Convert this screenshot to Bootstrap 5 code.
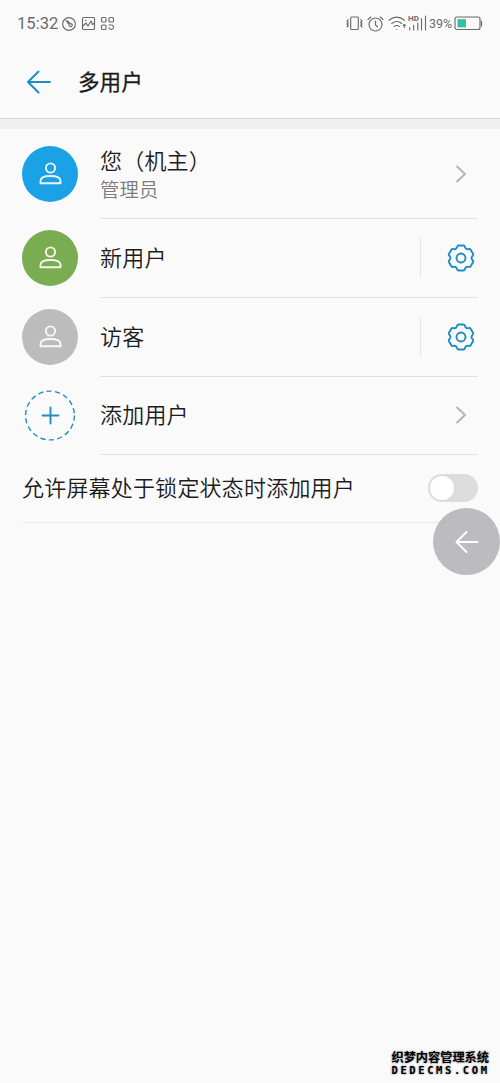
<!DOCTYPE html>
<html lang="zh-CN">
<head>
<meta charset="utf-8">
<meta name="viewport" content="width=device-width, initial-scale=1">
<title>多用户</title>
<link href="https://cdn.jsdelivr.net/npm/bootstrap@5.3.0/dist/css/bootstrap.min.css" rel="stylesheet">
<style>
body{background:#fafafa;color:#1c1c1c;font-family:Roboto,"Noto Sans CJK SC",sans-serif;font-weight:350;min-height:1083px;font-size:22px;line-height:30px;letter-spacing:.2px}
svg{display:block;flex:none;overflow:visible;fill:none;stroke-linecap:round;stroke-linejoin:round}
.status{height:46px;padding:1px 17px 0;color:#6b6b6b;font-size:16.6px;letter-spacing:0;font-weight:400}
.status svg{stroke:#6b6b6b;stroke-width:1.15}
.pct{font-size:12.5px;width:24px}
.topbar{height:73px;padding:0 26px;border-bottom:1px solid #d6d6d6}
.topbar h1{font-size:21.6px;font-weight:400;-webkit-text-stroke:.3px #1c1c1c;letter-spacing:0;margin-left:27px;padding-top:2px}
.band{height:10px;background:#efefef}
.user-row{padding:0 22px;height:79px}
.user-row.owner{height:90px}
.user-row.short{height:78.5px}
.avatar{width:56px;height:56px;flex:none;margin-top:-1px}
.avatar svg{stroke:#fff;stroke-width:1.9;opacity:.9}
.user-body{margin-left:22px;border-bottom:1px solid #e2e2e2}
.label{padding-top:2px}
.owner .label{padding-top:4px}
.sub{font-size:19.3px;line-height:27px;color:#7c7c7c}
.sep{width:1px;height:39px;background:#e4e4e4;margin-right:26px}
.gear{stroke:#1d8dc4;stroke-width:1.9;margin-right:3px}
.chev{stroke:#b5b5b5;stroke-width:2;margin-right:11px;stroke-linecap:butt;stroke-linejoin:miter}
.lock-row{height:67.500px;margin:0 22px;border-bottom:1px solid #e8e8e8}
.toggle{width:50px;height:28px;padding:2px;background:#dcdcdc}
.toggle span{width:24px;height:24px;background:#fff}
.float-back{right:0;top:508px;width:67px;height:67px;background:rgba(172,173,177,.8)}
.mark-site{right:11px;bottom:7px;color:#000;text-shadow:0 0 2px #999,0 0 2px #aaa,1px 1px 0 #fff,-1px -1px 0 #fff;letter-spacing:0}
.mark-cn{font:700 12.2px/14px "Noto Sans CJK SC",sans-serif}
.mark-en{font:700 10.5px/12px "DejaVu Sans Mono",monospace;letter-spacing:2.6px;margin-right:-3px}
</style>
</head>
<body class="position-relative">
<svg width="0" height="0" class="position-absolute">
  <symbol id="person" viewBox="0 0 24 24"><circle cx="12.500" cy="6" r="4.600"/><path d="M2.500 21.200v-2.200c0-3.300 4.400-5 10-5s10 1.700 10 5v2.200z"/></symbol>
  <symbol id="gear" viewBox="-14 -14 28 28"><path d="M-2.700-12.500H2.700C4-12.500 3.690-10 5.250-9.100S8.830-9.710 9.475-8.590L12.175-3.910C12.825-2.790 10.500-1.800 10.500 0S12.825 2.790 12.175 3.910L9.475 8.590C8.830 9.710 6.810 8.200 5.250 9.100S4 12.500 2.700 12.500H-2.700C-4 12.500-3.690 10-5.250 9.100S-8.830 9.710-9.475 8.590L-12.175 3.910C-12.825 2.790-10.500 1.800-10.500 0S-12.825-2.790-12.175-3.910L-9.475-8.590C-8.830-9.710-6.810-8.200-5.250-9.100S-4-12.500-2.700-12.500z"/><circle r="4.500"/></symbol>
</svg>

<div class="status d-flex align-items-center">
  <span>15:32</span>
  <svg class="ms-1" width="14" height="14" viewBox="0 0 14 14"><circle cx="7" cy="7" r="6.400"/><path d="M4 3.500l3 4M5.500 4l3 3M7 8a1.600 1.600 0 1 0 2.500-1.300"/></svg>
  <svg style="margin-left:6px" width="13" height="13" viewBox="0 0 13 13"><rect x=".5" y=".5" width="12" height="12" rx="1"/><path d="M1 9l3-3 2 3 3-5 1.500 3.500L12 6.500M3.500 3.400h.4"/></svg>
  <svg style="margin-left:6px" width="13" height="13" viewBox="0 0 13 13"><rect x=".5" y=".5" width="4.500" height="4.500" rx="1"/><rect x="8" y=".5" width="4.500" height="4.500" rx="1"/><rect x=".5" y="8" width="4.500" height="4.500" rx="1"/><path d="M8 8h2.500a2.200 2.200 0 1 1-2.300 2.800"/></svg>
  <div class="ms-auto d-flex align-items-center">
    <svg width="17" height="15" viewBox="0 0 17 15"><rect x="4.700" y="1" width="7.600" height="12.500" rx=".8"/><path d="M2.200 3.500L1 5l1.300 1.500L1 8l1.300 1.500L1 11M14.800 3.500L16 5l-1.300 1.500L16 8l-1.300 1.500L16 11"/></svg>
    <svg style="margin-left:4px" width="17" height="16" viewBox="0 0 17 16"><circle cx="8.500" cy="8.500" r="6.500"/><path d="M8.500 5v4l2 1.800M1 3.500L3.700 1M16 3.500L13.300 1"/></svg>
    <svg style="margin-left:4px" width="39" height="17" viewBox="0 0 39 17"><path d="M1 5.200q7.500-6 15.500 0M3.700 8.500q5-4 10 0M6.300 11.500q2.500-2 5 0M8.800 14.200h.1M16.300 9.500v3M15.300 10.500l1-1 1 1M21.700 12.500v2.500M25.700 10.300v4.700M29.800 8v7M33.500 3.500v11.500M37.500 1v14"/><text x="20" y="5.500" font-size="8" font-weight="700" fill="#6b6b6b" stroke="none">HD</text></svg>
    <span class="pct" style="margin-left:2px">39%</span>
    <svg style="margin-left:1px" width="29" height="15" viewBox="0 0 29 15"><rect x="1" y="1" width="25" height="12.500" rx="2"/><path d="M27.500 5v5"/><rect x="3.500" y="3.200" width="8.500" height="8.200" fill="#33bfa3" stroke="none"/></svg>
  </div>
</div>

<header class="topbar d-flex align-items-center">
  <svg width="25" height="24" viewBox="0 0 25 24" stroke="#1d8dc4" stroke-width="2"><path d="M24 12H2M12.500 1.500L2 12l10.500 10.500"/></svg>
  <h1 class="mb-0">多用户</h1>
</header>
<div class="band"></div>

<main>
  <div class="user-row owner d-flex align-items-center">
    <div class="avatar rounded-circle d-flex align-items-center justify-content-center" style="background:#1ba2e6"><svg width="24" height="24"><use href="#person"/></svg></div>
    <div class="user-body flex-grow-1 h-100 d-flex align-items-center justify-content-between">
      <div class="label"><div>您（机主）</div><div class="sub">管理员</div></div>
      <svg class="chev" width="12" height="18" viewBox="0 0 12 18"><path d="M1.500 1L10 9l-8.500 8"/></svg>
    </div>
  </div>
  <div class="user-row short d-flex align-items-center">
    <div class="avatar rounded-circle d-flex align-items-center justify-content-center" style="background:#7aac52"><svg width="24" height="24"><use href="#person"/></svg></div>
    <div class="user-body flex-grow-1 h-100 d-flex align-items-center">
      <div class="label me-auto">新用户</div><div class="sep"></div>
      <svg class="gear" width="28" height="28"><use href="#gear"/></svg>
    </div>
  </div>
  <div class="user-row d-flex align-items-center">
    <div class="avatar rounded-circle d-flex align-items-center justify-content-center" style="background:#bcbcbc"><svg width="24" height="24"><use href="#person"/></svg></div>
    <div class="user-body flex-grow-1 h-100 d-flex align-items-center">
      <div class="label me-auto">访客</div><div class="sep"></div>
      <svg class="gear" width="28" height="28"><use href="#gear"/></svg>
    </div>
  </div>
  <div class="user-row short d-flex align-items-center">
    <svg width="56" height="56" viewBox="0 0 56 56" stroke="#1d8dc4"><circle cx="28" cy="27.500" r="24.400" stroke-width="1.400" stroke-dasharray="5.200 3.316" stroke-linecap="butt"/><path d="M28.500 19.500v16M20.500 27.500h16" stroke-width="1.900"/></svg>
    <div class="user-body flex-grow-1 h-100 d-flex align-items-center justify-content-between">
      <div class="label">添加用户</div>
      <svg class="chev" width="12" height="18" viewBox="0 0 12 18"><path d="M1.500 1L10 9l-8.500 8"/></svg>
    </div>
  </div>
  <div class="lock-row d-flex align-items-center justify-content-between">
    <div class="label">允许屏幕处于锁定状态时添加用户</div>
    <div class="toggle rounded-pill"><span class="d-block rounded-circle"></span></div>
  </div>
</main>

<div class="float-back position-absolute rounded-circle d-flex align-items-center justify-content-center">
  <svg width="24" height="22" viewBox="0 0 24 22" stroke="#fff" stroke-width="2"><path d="M22.500 11H1.500M11.500 1L1.500 11l10 10"/></svg>
</div>
<div class="mark-site position-absolute text-nowrap"><div class="mark-cn">织梦内容管理系统</div><div class="mark-en">DEDECMS.COM</div></div>
<script src="https://cdn.jsdelivr.net/npm/bootstrap@5.3.0/dist/js/bootstrap.bundle.min.js"></script>
</body>
</html>
